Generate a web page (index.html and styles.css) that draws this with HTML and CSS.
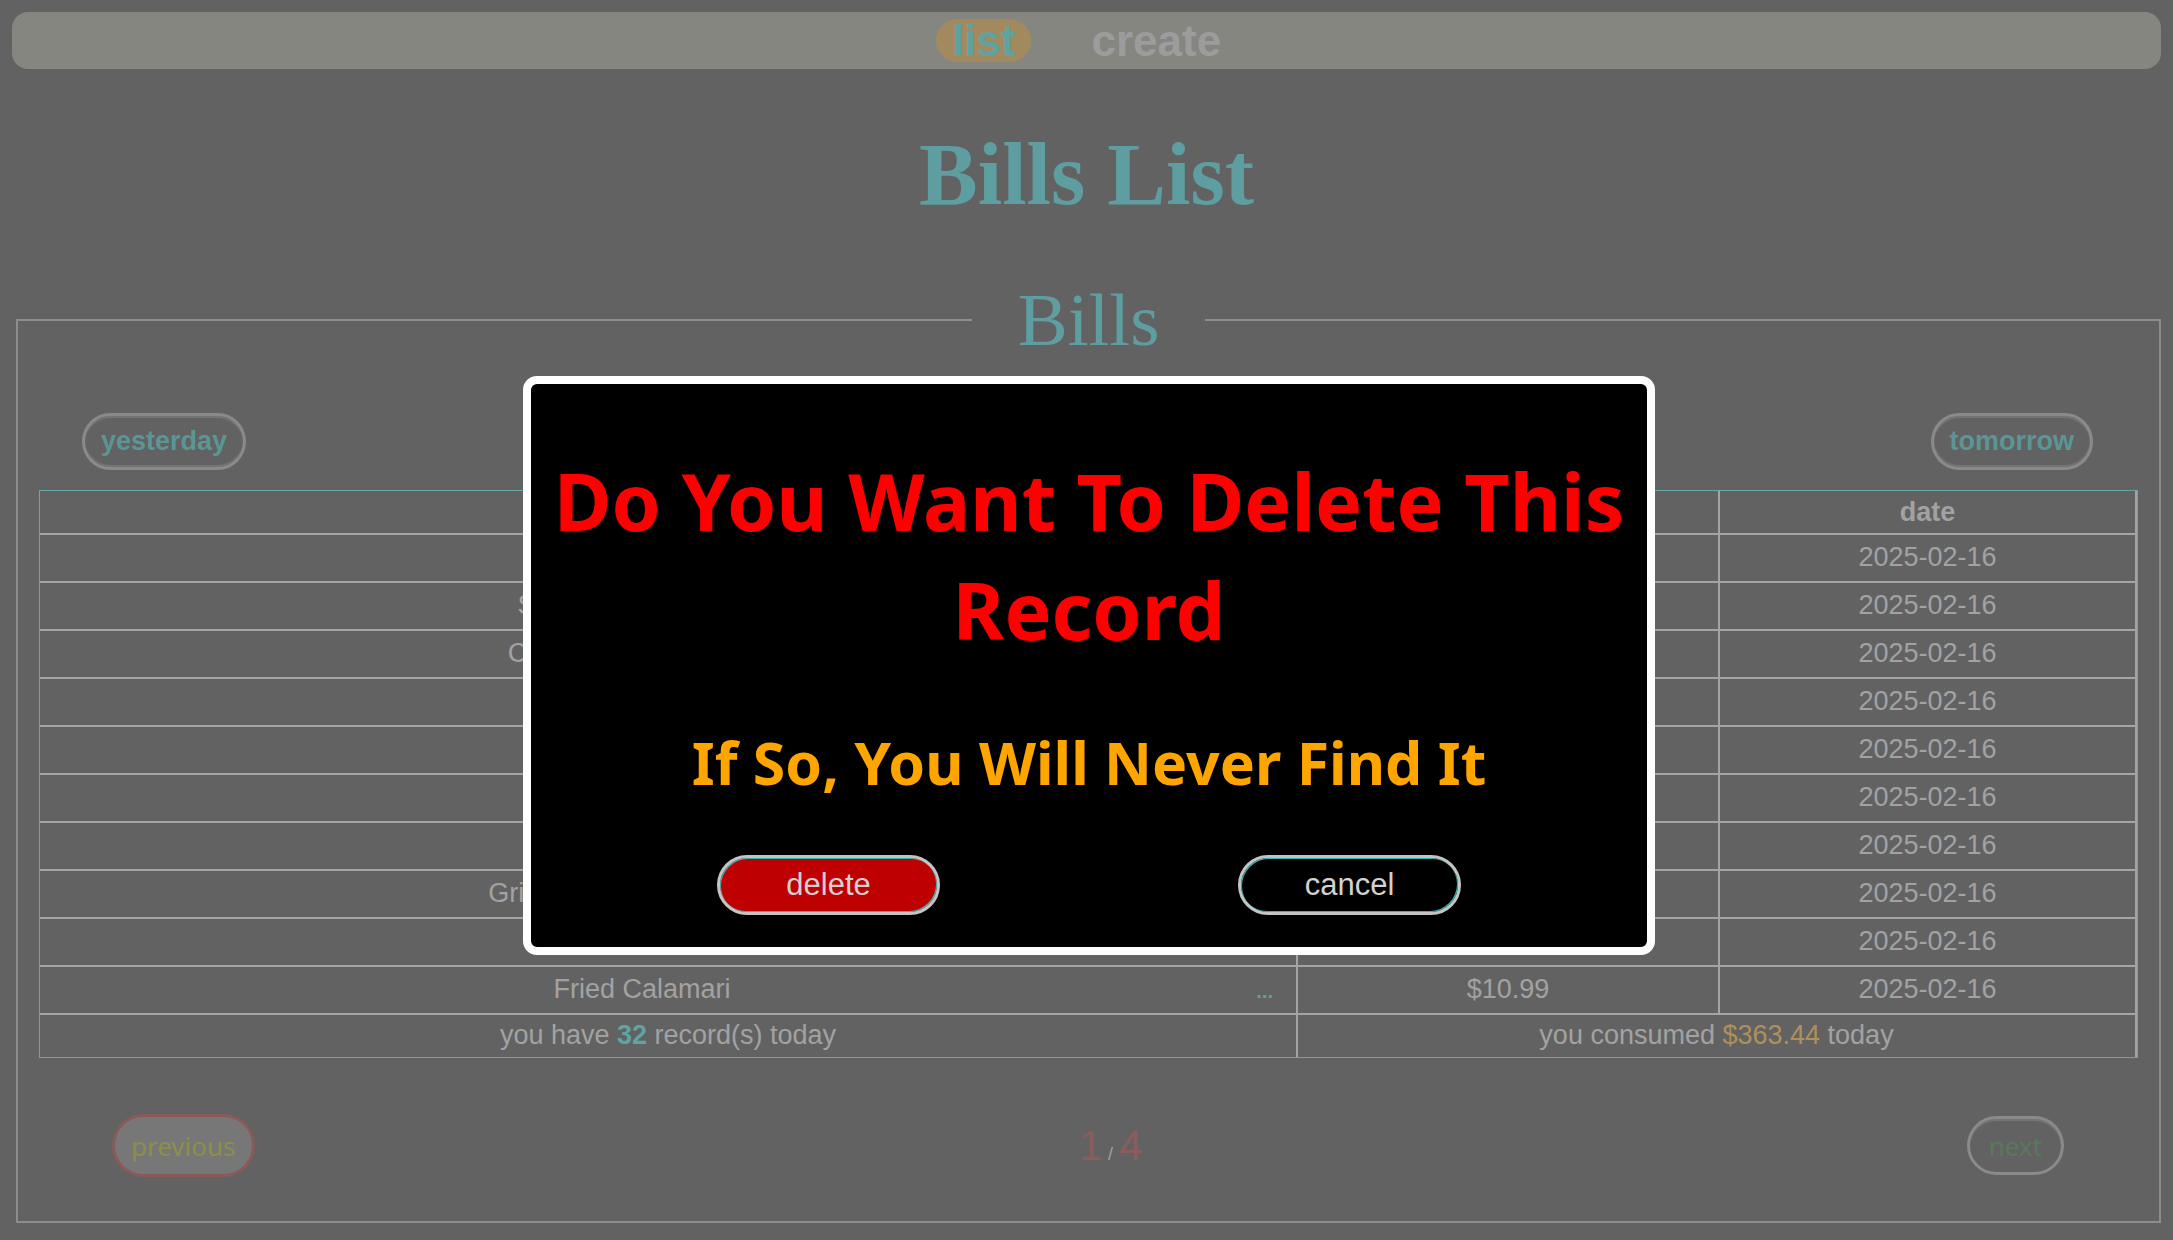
FILE: index.html
```html
<!DOCTYPE html>
<html lang="en">
<head>
<meta charset="utf-8">
<title>Bills List</title>
<link rel="stylesheet" href="styles.css">
</head>
<body>
<nav class="topnav">
  <a class="nav-item active" href="#">list</a>
  <a class="nav-item" href="#">create</a>
</nav>
<main>
  <h1 class="page-title">Bills List</h1>
  <fieldset class="bills">
    <legend class="bills-legend">Bills</legend>
    <div class="day-nav">
      <button class="pill-btn">yesterday</button>
      <button class="pill-btn">tomorrow</button>
    </div>
    <table class="bill-table">
      <colgroup><col class="c-name"><col class="c-amount"><col></colgroup>
      <thead>
        <tr><th>name</th><th>amount</th><th>date</th></tr>
      </thead>
      <tbody>
        <tr><td><div class="name-wrap"><span class="nm">Margherita Pizza</span><span class="more">...</span></div></td><td>$14.50</td><td>2025-02-16</td></tr>
        <tr><td><div class="name-wrap"><span class="nm">Spaghetti Carbonara</span><span class="more">...</span></div></td><td>$16.99</td><td>2025-02-16</td></tr>
        <tr><td><div class="name-wrap"><span class="nm">Chicken Caesar Salad</span><span class="more">...</span></div></td><td>$12.75</td><td>2025-02-16</td></tr>
        <tr><td><div class="name-wrap"><span class="nm">Beef Burger</span><span class="more">...</span></div></td><td>$11.25</td><td>2025-02-16</td></tr>
        <tr><td><div class="name-wrap"><span class="nm">Fish Tacos</span><span class="more">...</span></div></td><td>$9.80</td><td>2025-02-16</td></tr>
        <tr><td><div class="name-wrap"><span class="nm">Tomato Soup</span><span class="more">...</span></div></td><td>$6.50</td><td>2025-02-16</td></tr>
        <tr><td><div class="name-wrap"><span class="nm">Pad Thai</span><span class="more">...</span></div></td><td>$13.40</td><td>2025-02-16</td></tr>
        <tr><td><div class="name-wrap"><span class="nm">Grilled Chicken Sandwich</span><span class="more">...</span></div></td><td>$10.25</td><td>2025-02-16</td></tr>
        <tr><td><div class="name-wrap"><span class="nm">Iced Latte</span><span class="more">...</span></div></td><td>$4.95</td><td>2025-02-16</td></tr>
        <tr><td><div class="name-wrap"><span class="nm">Fried Calamari</span><span class="more">...</span></div></td><td>$10.99</td><td>2025-02-16</td></tr>
      </tbody>
      <tfoot>
        <tr>
          <td>you have <b class="count">32</b> record(s) today</td>
          <td colspan="2">you consumed <span class="total">$363.44</span> today</td>
        </tr>
      </tfoot>
    </table>
    <div class="pager">
      <button class="pg-btn prev">previous</button>
      <div class="pages"><span class="pg-num">1</span><span class="pg-slash">/</span><span class="pg-num">4</span></div>
      <button class="pg-btn next">next</button>
    </div>
  </fieldset>
</main>

<div class="modal" role="dialog">
  <h2 class="modal-title">Do You Want To Delete This Record</h2>
  <p class="modal-warn">If So, You Will Never Find It</p>
  <div class="modal-actions">
    <button class="m-btn m-delete">delete</button>
    <button class="m-btn m-cancel">cancel</button>
  </div>
</div>
</body>
</html>
```

FILE: styles.css
```css
html, body {
  margin: 0;
  background: #626262;
}
body {
  padding: 12px;
  font-family: "Liberation Sans", Arial, sans-serif;
  overflow: hidden;
}

/* top navigation */
.topnav {
  display: flex;
  justify-content: center;
  align-items: center;
  gap: 44px;
  height: 57px;
  background: #868680;
  border-radius: 16px;
}
.nav-item {
  font-family: "Liberation Sans", Arial, sans-serif;
  font-weight: bold;
  font-size: 44px;
  line-height: 43px;
  padding: 0 16px;
  color: #9c9c9c;
  text-decoration: none;
  border-radius: 22px;
}
.nav-item.active {
  background: #a28a5e;
  color: #5fa2a2;
}

/* heading */
.page-title {
  margin: 56px 0 0;
  text-align: center;
  font-family: "Liberation Serif", "Times New Roman", serif;
  font-weight: bold;
  font-size: 88px;
  line-height: 99px;
  color: #5f9ea0;
}

/* fieldset */
.bills {
  margin: 53px 0 0 4px;
  border: 2px solid #8d8d8d;
  padding: 0 21px 44px;
}
.bills-legend {
  margin: 0 auto;
  padding: 0 46px;
  font-family: "Liberation Serif", "Times New Roman", serif;
  font-size: 75px;
  line-height: normal;
  color: #5f9ea0;
}

.day-nav {
  display: flex;
  justify-content: space-between;
  padding: 0 45px 0 43px;
  margin-top: 50px;
}
.pill-btn {
  height: 57px;
  padding: 0 16px;
  border: 3px solid #8a8a8a;
  border-radius: 29px;
  background: transparent;
  color: #5a9696;
  font-family: "Liberation Sans", Arial, sans-serif;
  font-weight: bold;
  font-size: 27px;
  box-shadow: inset 0 2px 0 #747474, inset 0 -2px 0 #747474;
}

/* table */
.bill-table {
  width: 100%;
  margin-top: 20px;
  border-collapse: separate;
  border-spacing: 0;
  border: 1px solid #6aa6a6;
  table-layout: fixed;
}
.c-name { width: 1258px; }
.c-amount { width: 422px; }
.bill-table th,
.bill-table td {
  border-right: 2px solid #a4a4a4;
  border-bottom: 2px solid #a4a4a4;
  text-align: center;
  font-size: 27px;
  line-height: 31px;
  color: #a2a2a2;
  padding: 7px 8px 8px;
}
.bill-table th {
  font-weight: bold;
  padding: 6px 8px 5px;
}
.bill-table tfoot td {
  border-bottom: none;
  padding: 5px 8px 6px;
}
.name-wrap {
  display: flex;
  align-items: baseline;
  height: 31px;
}
.nm {
  flex: 1;
  text-align: center;
}
.more {
  width: 52px;
  padding-right: 15px;
  box-sizing: border-box;
  text-align: right;
  font-size: 20px;
  line-height: 20px;
  font-weight: bold;
  color: #5fa0a0;
}
.count {
  color: #5fa3a3;
}
.total {
  color: #b0905a;
}

/* pager */
.pager {
  display: flex;
  justify-content: space-between;
  align-items: center;
  margin-top: 56px;
  padding: 0 74px 0 73px;
}
.pg-btn {
  font-family: "Noto Sans", "Liberation Sans", sans-serif;
  font-size: 26px;
  border-radius: 32px;
  padding: 0 16px;
}
.prev {
  height: 63px;
  border: 3px solid #8a5a5a;
  background: #777777;
  color: #8e8e4c;
}
.next {
  height: 59px;
  padding: 0 19px;
  border: 3px solid #8a8a8a;
  background: transparent;
  color: #5a785a;
  box-shadow: inset 0 2px 0 #747474;
}
.pages {
  display: flex;
  align-items: baseline;
}
.pg-num {
  font-family: "Liberation Sans", Arial, sans-serif;
  font-size: 42px;
  color: #8a5c5c;
}
.pg-slash {
  font-size: 18px;
  color: #a0a0a0;
  margin: 0 6px;
}

/* modal (overlay) */
.modal {
  position: fixed;
  top: 376px;
  left: 523px;
  width: 1116px;
  padding: 62px 0 32px;
  background: #000;
  border: 8px solid #fff;
  border-radius: 14px;
  text-align: center;
}
.modal-title {
  margin: 0;
  font-family: "Noto Sans", "Open Sans", sans-serif;
  font-weight: bold;
  font-size: 79px;
  line-height: 109px;
  color: #ff0000;
}
.modal-warn {
  margin: 59px 0 0;
  font-family: "Noto Sans", "Open Sans", sans-serif;
  font-weight: bold;
  font-size: 59px;
  line-height: 79px;
  color: #ffa500;
}
.modal-actions {
  display: flex;
  justify-content: center;
  gap: 298px;
  margin-top: 53px;
}
.m-btn {
  width: 223px;
  height: 60px;
  border-radius: 30px;
  border: 3px solid #c4c4c4;
  box-shadow: inset 1px 1px 0 #2fb3b3, inset -1px -1px 0 #2fb3b3;
  font-family: "Liberation Sans", Arial, sans-serif;
  font-size: 31px;
  color: #d2d2d2;
}
.m-delete {
  background: #bf0000;
}
.m-cancel {
  background: #000;
}
```
